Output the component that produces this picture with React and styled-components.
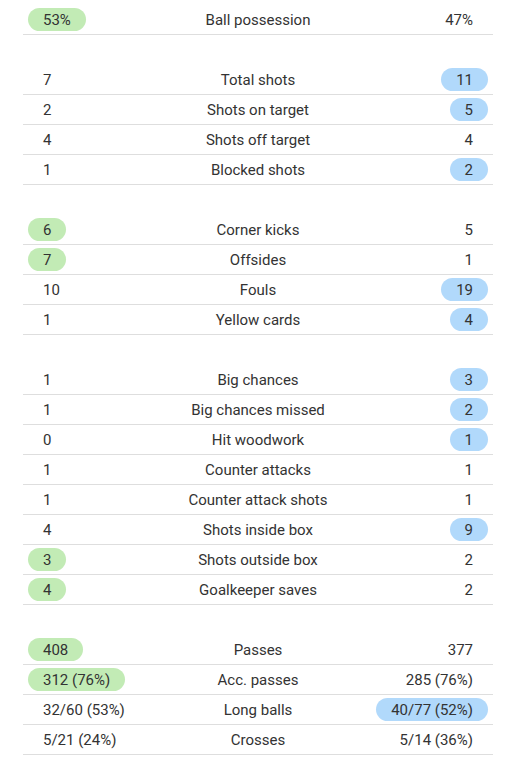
import React from 'react'
import styled, { createGlobalStyle } from 'styled-components'

const groups = [
    [
        { label: 'Ball possession', home: '53%', away: '47%' },
    ],
    [
        { label: 'Total shots', home: '7', away: '11' },
        { label: 'Shots on target', home: '2', away: '5' },
        { label: 'Shots off target', home: '4', away: '4' },
        { label: 'Blocked shots', home: '1', away: '2' },
    ],
    [
        { label: 'Corner kicks', home: '6', away: '5' },
        { label: 'Offsides', home: '7', away: '1' },
        { label: 'Fouls', home: '10', away: '19' },
        { label: 'Yellow cards', home: '1', away: '4' },
    ],
    [
        { label: 'Big chances', home: '1', away: '3' },
        { label: 'Big chances missed', home: '1', away: '2' },
        { label: 'Hit woodwork', home: '0', away: '1' },
        { label: 'Counter attacks', home: '1', away: '1' },
        { label: 'Counter attack shots', home: '1', away: '1' },
        { label: 'Shots inside box', home: '4', away: '9' },
        { label: 'Shots outside box', home: '3', away: '2' },
        { label: 'Goalkeeper saves', home: '4', away: '2' },
    ],
    [
        { label: 'Passes', home: '408', away: '377', win: 'home' },
        { label: 'Acc. passes', home: '312 (76%)', away: '285 (76%)', win: 'home' },
        { label: 'Long balls', home: '32/60 (53%)', away: '40/77 (52%)', win: 'away' },
        { label: 'Crosses', home: '5/21 (24%)', away: '5/14 (36%)', win: 'none' },
    ],
]

// leading number decides who gets the highlight
function winner(stat) {
    if (stat.win) return stat.win
    const h = parseFloat(stat.home)
    const a = parseFloat(stat.away)
    if (h > a) return 'home'
    if (a > h) return 'away'
    return 'none'
}

function StatRow({ stat }) {
    const w = winner(stat)
    return (
        <Row>
            <Side>
                <Value side="home" active={w === 'home'}>{stat.home}</Value>
            </Side>
            <Label>{stat.label}</Label>
            <Side right>
                <Value side="away" active={w === 'away'}>{stat.away}</Value>
            </Side>
        </Row>
    )
}

export default function App() {
    return (
        <>
            <GlobalStyle />
            <Wrap>
                {groups.map((group, i) => (
                    <Group key={i}>
                        {group.map(stat => <StatRow key={stat.label} stat={stat} />)}
                    </Group>
                ))}
            </Wrap>
        </>
    )
}

const GlobalStyle = createGlobalStyle`
    body {
        margin: 0;
        background: #fff;
        font-family: Roboto, "Liberation Sans", sans-serif;
        color: #333;
    }
`

const Wrap = styled.div`
    width: 470px;
    margin-left: 23px;
    padding-top: 5px;
    display: flex;
    flex-direction: column;
    gap: 30px;
`

const Group = styled.div`
    display: flex;
    flex-direction: column;
`

const Row = styled.div`
    display: grid;
    grid-template-columns: 1fr auto 1fr;
    align-items: center;
    height: 29px;
    border-bottom: 1px solid #dedede;
    font-size: 15px;
`

const Side = styled.div`
    display: flex;
    justify-content: ${props => props.right ? 'flex-end' : 'flex-start'};
    padding: 0 5px;
`

const Value = styled.span`
    display: inline-flex;
    align-items: center;
    height: 23px;
    padding: 0 15px;
    border-radius: 12px;
    white-space: nowrap;
    background: ${props => !props.active ? 'transparent'
        : props.side === 'home' ? '#c2ebb5' : '#b1d9fb'};
`

const Label = styled.div`
    text-align: center;
    white-space: nowrap;
`
